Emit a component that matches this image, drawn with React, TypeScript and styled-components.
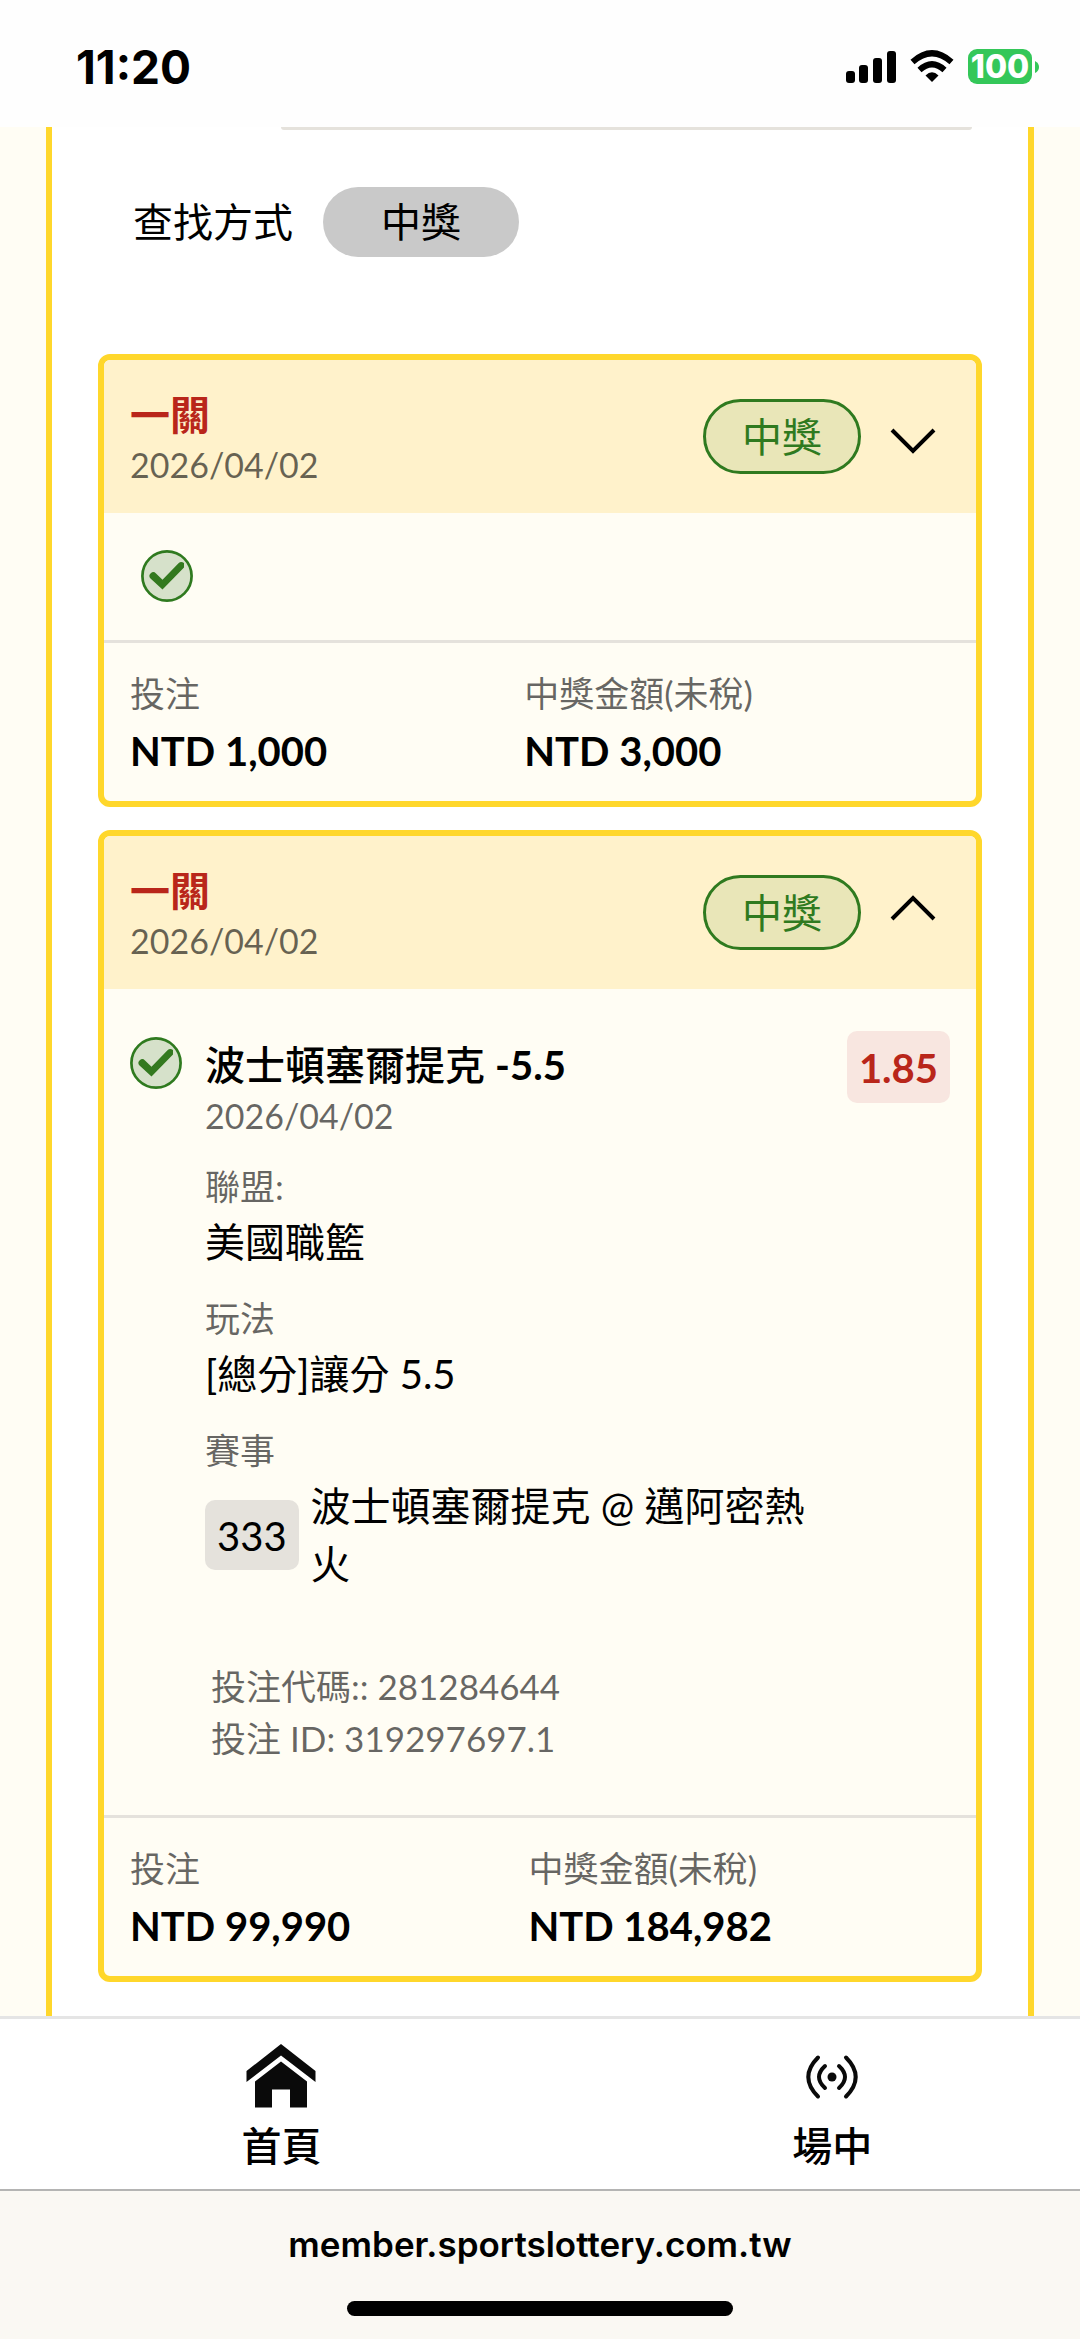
import React, { useState } from "react";
import styled, { createGlobalStyle } from "styled-components";

const sans = `Lato, "Noto Sans CJK TC", sans-serif`;
const system = `Inter, "Noto Sans CJK TC", sans-serif`;

const GlobalStyle = createGlobalStyle`
  *, *::before, *::after { box-sizing: border-box; }
  body { margin: 0; background: #fffdf4; color: #000; font-family: ${sans}; font-size: 40px; line-height: 58px; }
  h2, h3, p, dl, dd { margin: 0; font-size: inherit; font-weight: inherit; }
  button, input { font: inherit; color: inherit; }
`;

const Screen = styled.div`
  display: flex;
  flex-direction: column;
  min-height: 100vh;
`;

const StatusBar = styled.header`
  display: flex;
  align-items: center;
  justify-content: space-between;
  height: 127px;
  padding: 6px 41px 0 76px;
  background: #fefefe;
  font-family: ${system};
`;

const Clock = styled.time`
  font-size: 46px;
  font-weight: 700;
`;

const StatusIcons = styled.div`
  display: flex;
  align-items: center;
  gap: 14px;
`;

const Battery = styled.div`
  display: flex;
  align-items: center;
  gap: 3px;
`;

const BatteryLevel = styled.span`
  display: flex;
  align-items: center;
  justify-content: center;
  width: 64px;
  height: 35px;
  border-radius: 9px;
  background: #34c759;
  color: #fff;
  font-size: 32px;
  font-weight: 800;
`;

const Main = styled.main`
  flex: 1;
  padding: 0 46px;
`;

const Panel = styled.div`
  display: flex;
  flex-direction: column;
  height: 100%;
  padding: 0 46px 34px;
  border: solid #ffd72b;
  border-width: 0 6px;
  background: #fff;
`;

const FieldEdge = styled.div`
  height: 3px;
  margin: 0 10px 0 183px;
  border-radius: 0 0 8px 8px;
  background: #e5e2dc;
`;

const Filter = styled.div`
  display: flex;
  align-items: center;
  gap: 30px;
  padding: 57px 35px 97px;
`;

const FilterButton = styled.button`
  height: 70px;
  padding: 0 58px;
  border: 0;
  border-radius: 35px;
  background: #c9c9c9;
`;

const Tickets = styled.div`
  display: flex;
  flex-direction: column;
  gap: 23px;
`;

const Card = styled.article`
  overflow: hidden;
  border: 6px solid #ffd72b;
  border-radius: 12px;
  background: #fffdf4;
`;

const CardHeader = styled.header`
  display: flex;
  align-items: center;
  gap: 15px;
  height: 153px;
  padding: 0 26px;
  background: #fff2cb;
`;

const Heading = styled.div`
  flex: 1;
  padding-top: 8px;
`;

const TicketTitle = styled.h2`
  color: #b9261a;
  font-weight: 700;
  line-height: 48px;
`;

const DateText = styled.p`
  color: rgba(0, 0, 0, 0.6);
  font-size: 34px;
  line-height: 52px;
`;

const WinTag = styled.span`
  display: flex;
  align-items: center;
  height: 75px;
  padding: 0 36px;
  border: 3px solid #2f7a1f;
  border-radius: 38px;
  background: #e9e6b8;
  color: #2f7a1f;
`;

const Toggle = styled.button`
  display: flex;
  padding: 0;
  border: 0;
  background: none;
`;

const Summary = styled.div`
  display: flex;
  align-items: center;
  height: 127px;
  padding: 0 37px 2px;
`;

const Details = styled.div`
  display: grid;
  grid-template-columns: 52px minmax(0, 1fr) auto;
  column-gap: 23px;
  align-items: start;
  padding: 42px 26px 50px;
`;

const CheckSlot = styled.div`
  display: flex;
  padding-top: 6px;
`;

const Selection = styled.div`
  display: flex;
  flex-direction: column;
  padding-top: 9px;
`;

const SelectionTitle = styled.h3`
  font-weight: 500;
  line-height: 50px;
`;

const Handicap = styled.strong`
  font-weight: 700;
`;

const Facts = styled.dl`
  display: flex;
  flex-direction: column;
  gap: 20px;
  padding-top: 17px;
`;

const Label = styled.dt`
  color: rgba(0, 0, 0, 0.6);
  font-size: 35px;
  line-height: 54px;
`;

const Value = styled.dd<{ $strong?: boolean }>`
  font-weight: ${(p) => (p.$strong ? 700 : 400)};
`;

const Match = styled.dd`
  display: flex;
  align-items: center;
  gap: 12px;
`;

const MatchNumber = styled.span`
  height: 70px;
  padding: 0 12px;
  border-radius: 10px;
  background: #e5e2dc;
  line-height: 72px;
`;

const Reference = styled.div`
  padding: 67px 6px 1px;
  color: rgba(0, 0, 0, 0.6);
  font-size: 35px;
  line-height: 52px;
`;

const Odds = styled.span`
  height: 72px;
  padding: 0 12px;
  border-radius: 10px;
  background: #f8e6e0;
  color: #b9261a;
  font-weight: 700;
  line-height: 74px;
`;

const Totals = styled.dl`
  display: flex;
  height: 161px;
  padding: 23px 26px 0;
  border-top: 3px solid #e5e2dc;
`;

const Total = styled.div`
  display: flex;
  flex: 1 1 auto;
  flex-direction: column;
  gap: 2px;
`;

const TabBar = styled.nav`
  display: flex;
  height: 173px;
  padding: 0 0 0 6px;
  overflow: hidden;
  border-top: 3px solid #e5e5e5;
  background: #fff;
`;

const Tab = styled.a`
  display: flex;
  flex: 0 0 51vw;
  flex-direction: column;
  align-items: center;
  gap: 3px;
  padding-top: 21px;
  color: #000;
  font-weight: 500;
  text-decoration: none;
`;

const AddressBar = styled.footer`
  display: flex;
  flex-direction: column;
  align-items: center;
  gap: 28px;
  height: 150px;
  padding-top: 24px;
  border-top: 2px solid #b4b4b3;
  background: #faf8f3;
  font-family: ${system};
  font-size: 35px;
  font-weight: 600;
  font-variant-ligatures: none;
`;

const HomeIndicator = styled.div`
  flex: none;
  width: 386px;
  height: 15px;
  border-radius: 8px;
  background: #000;
`;

const Signal = () => (
  <svg width="50" height="32" viewBox="0 0 50 32" aria-hidden="true">
    <rect x="0" y="20" width="9" height="12" rx="3" />
    <rect x="13" y="14" width="9" height="18" rx="3" />
    <rect x="27" y="7" width="9" height="25" rx="3" />
    <rect x="41" y="0" width="9" height="32" rx="3" />
  </svg>
);

const Wifi = () => (
  <svg width="44" height="33" viewBox="0 0 44 33" aria-hidden="true">
    <path d="M22 32 L15.5 25.5 Q22 19 28.5 25.5 Z" />
    <path d="M9.5 20 Q22 8.5 34.5 20" fill="none" stroke="#000" strokeWidth="6" />
    <path d="M2.5 12 Q22 -5.5 41.5 12" fill="none" stroke="#000" strokeWidth="6" />
  </svg>
);

const CheckCircle = () => (
  <svg width="52" height="52" viewBox="0 0 52 52" role="img" aria-label="中獎">
    <circle cx="26" cy="26" r="24.6" fill="#d6e1ca" stroke="#2f7a1f" strokeWidth="2.7" />
    <path d="M9.5 28.5 a3.7 3.7 0 0 1 5.5 -5 L21.5 29.8 L37.5 13.3 Q40 10.8 43 13 V17.5 L21.5 39.5 Z" fill="#33791f" />
  </svg>
);

const Chevron = ({ up }: { up: boolean }) => (
  <svg width="74" height="74" viewBox="0 0 74 74" fill="none" stroke="#000" strokeWidth="4" aria-hidden="true">
    {up ? <path d="M16 43 L37 22 L58 43" /> : <path d="M16 30 L37 51 L58 30" />}
  </svg>
);

const HomeIcon = () => (
  <svg width="70" height="74" viewBox="0 0 70 74" fill="#0a0a0a" aria-hidden="true">
    <path d="M35 4 L69.5 31 V42 L35 15.5 L0.5 42 V31 Z" />
    <path d="M35 21.5 L61 41.5 V67.5 H44 V49.5 H26 V67.5 H9 V41.5 Z" />
  </svg>
);

const LiveIcon = () => (
  <svg width="70" height="74" viewBox="0 0 70 74" fill="none" stroke="#0a0a0a" strokeWidth="4" strokeLinecap="round" aria-hidden="true">
    <circle cx="35" cy="37" r="4.5" fill="#0a0a0a" stroke="none" />
    <path d="M28 26 Q16 37 28 48 M42 26 Q54 37 42 48 M21 17.5 Q1.5 37 21 56.5 M49 17.5 Q68.5 37 49 56.5" />
  </svg>
);

interface TicketData {
  stake: string;
  payout: string;
  startsOpen: boolean;
}

const tickets: TicketData[] = [
  { stake: "NTD 1,000", payout: "NTD 3,000", startsOpen: false },
  { stake: "NTD 99,990", payout: "NTD 184,982", startsOpen: true },
];

function Ticket({ stake, payout, startsOpen }: TicketData) {
  const [open, setOpen] = useState(startsOpen);
  return (
    <Card>
      <CardHeader>
        <Heading>
          <TicketTitle>一關</TicketTitle>
          <DateText>2026/04/02</DateText>
        </Heading>
        <WinTag>中獎</WinTag>
        <Toggle type="button" aria-label="詳情" aria-expanded={open} onClick={() => setOpen(!open)}>
          <Chevron up={open} />
        </Toggle>
      </CardHeader>
      {open ? (
        <Details>
          <CheckSlot>
            <CheckCircle />
          </CheckSlot>
          <Selection>
            <SelectionTitle>
              波士頓塞爾提克 <Handicap>-5.5</Handicap>
            </SelectionTitle>
            <DateText>2026/04/02</DateText>
            <Facts>
              <div>
                <Label>聯盟:</Label>
                <Value>美國職籃</Value>
              </div>
              <div>
                <Label>玩法</Label>
                <Value>[總分]讓分 5.5</Value>
              </div>
              <div>
                <Label>賽事</Label>
                <Match>
                  <MatchNumber>333</MatchNumber>
                  <span>波士頓塞爾提克 @ 邁阿密熱火</span>
                </Match>
              </div>
            </Facts>
            <Reference>
              <p>投注代碼:: 281284644</p>
              <p>投注 ID: 319297697.1</p>
            </Reference>
          </Selection>
          <Odds>1.85</Odds>
        </Details>
      ) : (
        <Summary>
          <CheckCircle />
        </Summary>
      )}
      <Totals>
        <Total>
          <Label>投注</Label>
          <Value $strong>{stake}</Value>
        </Total>
        <Total>
          <Label>中獎金額(未稅)</Label>
          <Value $strong>{payout}</Value>
        </Total>
      </Totals>
    </Card>
  );
}

export default function App() {
  return (
    <Screen>
      <GlobalStyle />
      <StatusBar>
        <Clock>11:20</Clock>
        <StatusIcons>
          <Signal />
          <Wifi />
          <Battery>
            <BatteryLevel>100</BatteryLevel>
            <svg width="4" height="12" viewBox="0 0 4 12" fill="#34c759" aria-hidden="true">
              <path d="M0 0 Q4 2 4 6 Q4 10 0 12 Z" />
            </svg>
          </Battery>
        </StatusIcons>
      </StatusBar>
      <Main>
        <Panel>
          <FieldEdge />
          <Filter>
            <span>查找方式</span>
            <FilterButton type="button">中獎</FilterButton>
          </Filter>
          <Tickets>
            {tickets.map((ticket) => (
              <Ticket key={ticket.stake} {...ticket} />
            ))}
          </Tickets>
        </Panel>
      </Main>
      <TabBar>
        <Tab href="#home">
          <HomeIcon />
          <span>首頁</span>
        </Tab>
        <Tab href="#live">
          <LiveIcon />
          <span>場中</span>
        </Tab>
      </TabBar>
      <AddressBar>
        <span>member.sportslottery.com.tw</span>
        <HomeIndicator />
      </AddressBar>
    </Screen>
  );
}
